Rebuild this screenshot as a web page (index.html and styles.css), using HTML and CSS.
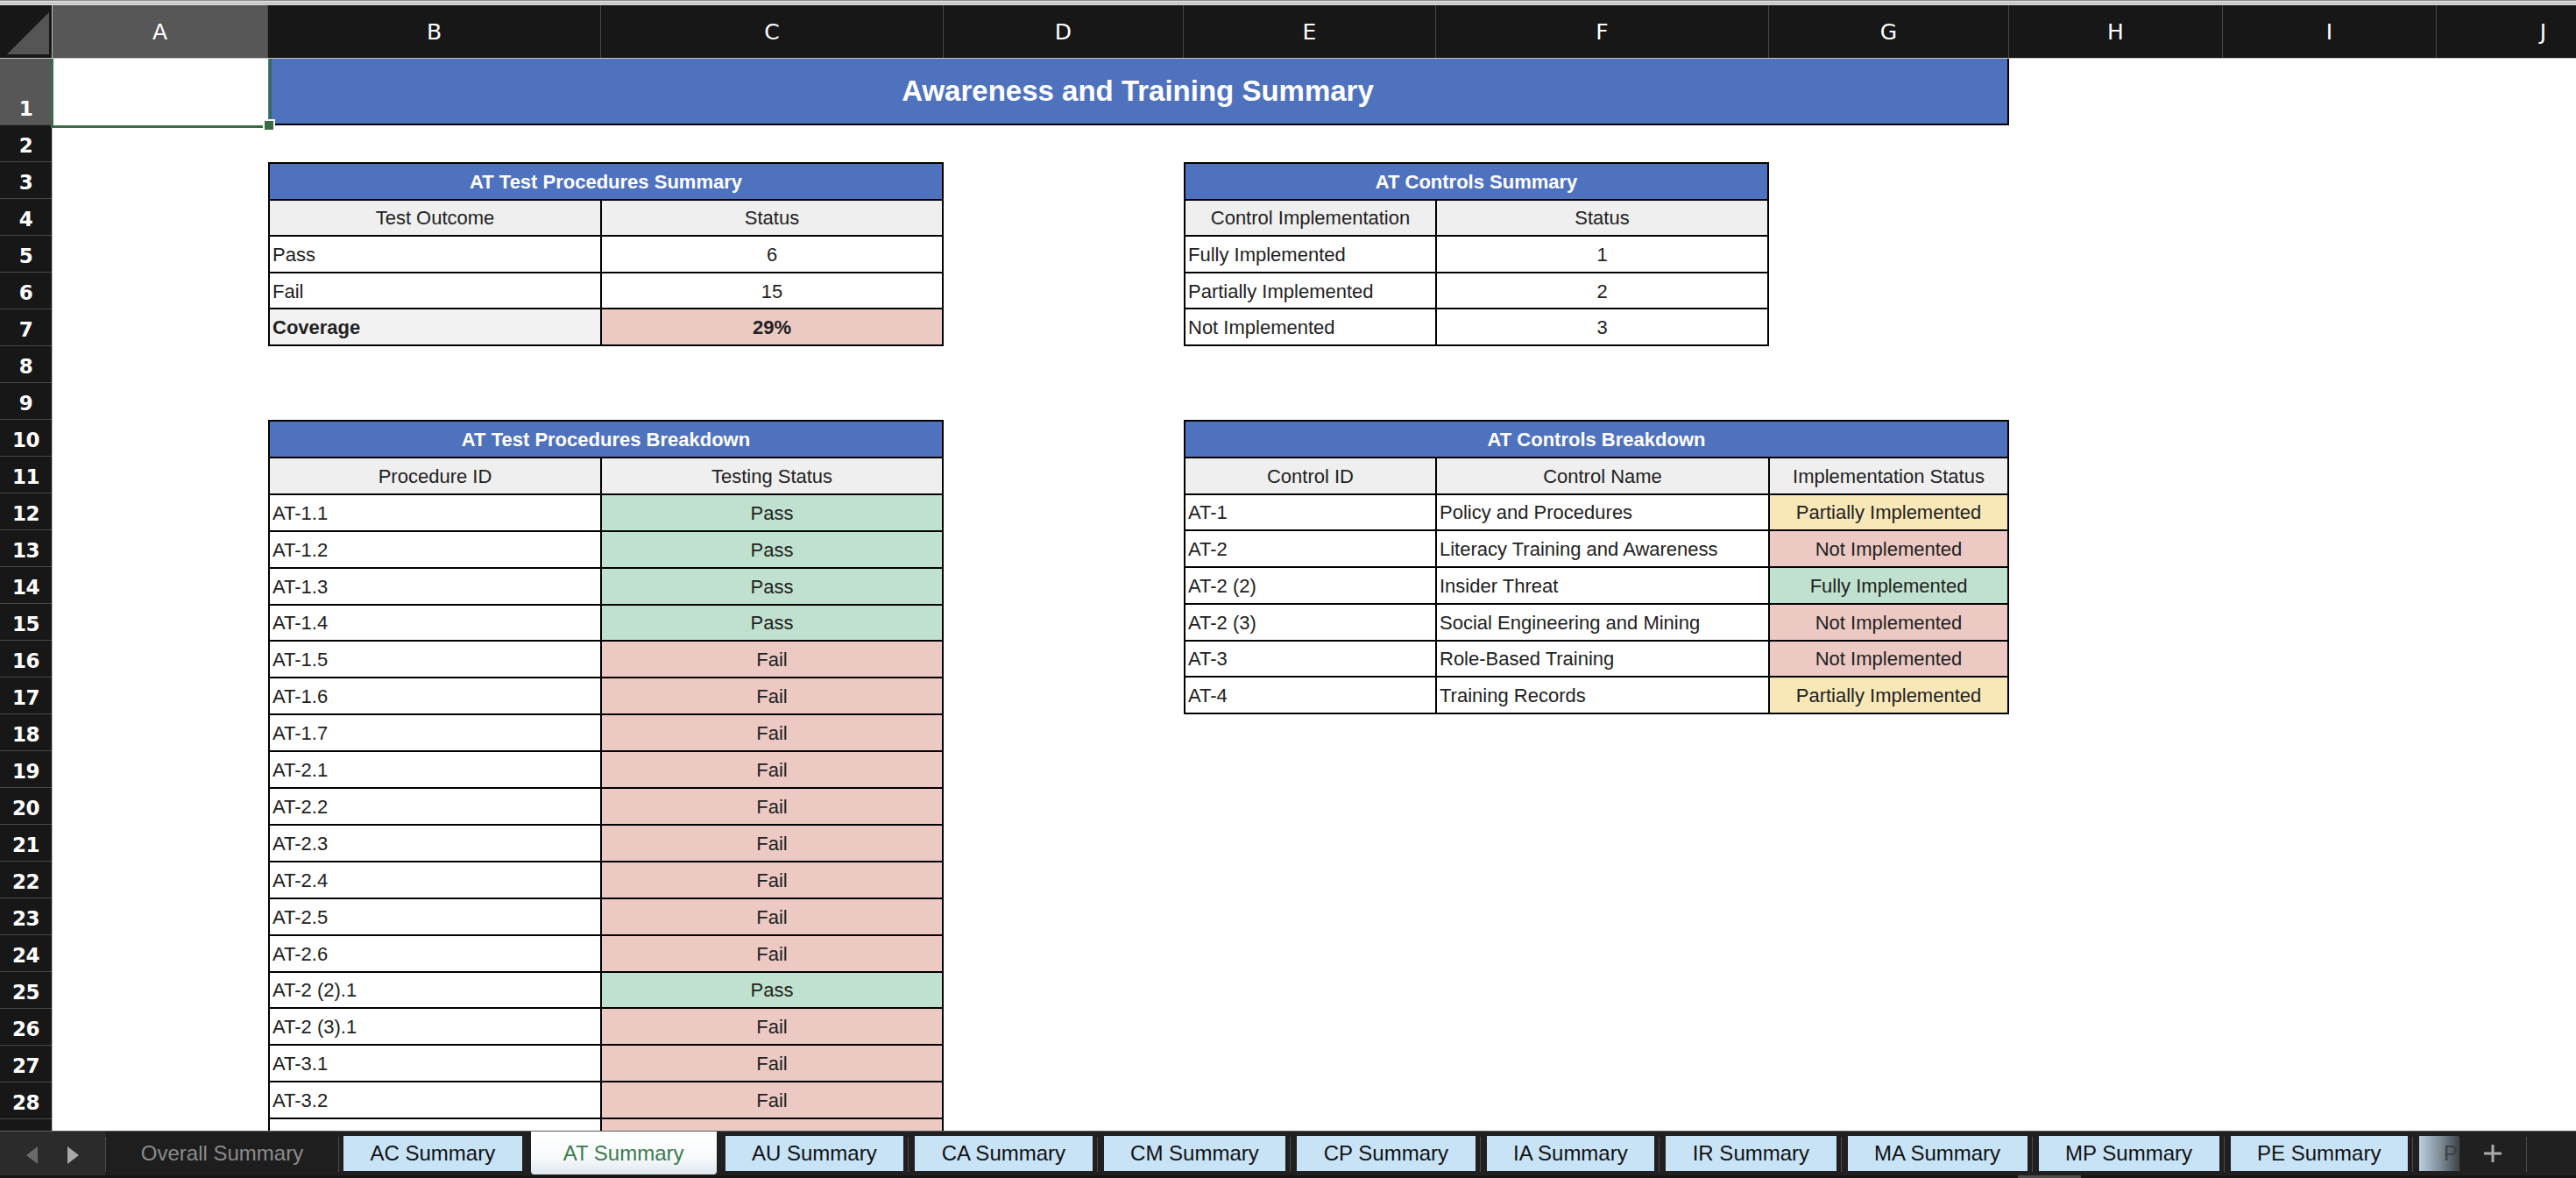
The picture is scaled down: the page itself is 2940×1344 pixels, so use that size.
FILE: index.html
```html
<!DOCTYPE html>
<html>
<head>
<meta charset="utf-8">
<title>Awareness and Training Summary</title>
<link rel="stylesheet" href="styles.css">
</head>
<body>
<div class="app">
  <div class="topstrip"></div>
  <div class="colhead">
    <div class="corner"><svg width="59" height="60" viewBox="0 0 59 60"><polygon points="8,56 56,8 56,56" fill="#555555"/></svg></div>
    <div class="ch sel">A</div>
    <div class="ch">B</div>
    <div class="ch">C</div>
    <div class="ch">D</div>
    <div class="ch">E</div>
    <div class="ch">F</div>
    <div class="ch">G</div>
    <div class="ch">H</div>
    <div class="ch">I</div>
    <div class="ch">J</div>
  </div>
  <div class="body">
    <div class="rowhead">
      <div class="rh r1 sel">1</div>
      <div class="rh">2</div>
      <div class="rh">3</div>
      <div class="rh">4</div>
      <div class="rh">5</div>
      <div class="rh">6</div>
      <div class="rh">7</div>
      <div class="rh">8</div>
      <div class="rh">9</div>
      <div class="rh">10</div>
      <div class="rh">11</div>
      <div class="rh">12</div>
      <div class="rh">13</div>
      <div class="rh">14</div>
      <div class="rh">15</div>
      <div class="rh">16</div>
      <div class="rh">17</div>
      <div class="rh">18</div>
      <div class="rh">19</div>
      <div class="rh">20</div>
      <div class="rh">21</div>
      <div class="rh">22</div>
      <div class="rh">23</div>
      <div class="rh">24</div>
      <div class="rh">25</div>
      <div class="rh">26</div>
      <div class="rh">27</div>
      <div class="rh">28</div>
      <div class="rh"></div>
    </div>
    <div class="cells">
      <div class="selbox"><span class="handle"></span></div>
      <div class="title">Awareness and Training Summary</div>

      <div class="tbl t1">
        <div class="cap">AT Test Procedures Summary</div>
        <div class="th">Test Outcome</div><div class="th">Status</div>
        <div>Pass</div><div class="ctr">6</div>
        <div>Fail</div><div class="ctr">15</div>
        <div class="b lab">Coverage</div><div class="ctr b fail">29%</div>
      </div>

      <div class="tbl t2">
        <div class="cap">AT Controls Summary</div>
        <div class="th">Control Implementation</div><div class="th">Status</div>
        <div>Fully Implemented</div><div class="ctr">1</div>
        <div>Partially Implemented</div><div class="ctr">2</div>
        <div>Not Implemented</div><div class="ctr">3</div>
      </div>

      <div class="tbl t3">
        <div class="cap">AT Test Procedures Breakdown</div>
        <div class="th">Procedure ID</div><div class="th">Testing Status</div>
        <div>AT-1.1</div><div class="ctr pass">Pass</div>
        <div>AT-1.2</div><div class="ctr pass">Pass</div>
        <div>AT-1.3</div><div class="ctr pass">Pass</div>
        <div>AT-1.4</div><div class="ctr pass">Pass</div>
        <div>AT-1.5</div><div class="ctr fail">Fail</div>
        <div>AT-1.6</div><div class="ctr fail">Fail</div>
        <div>AT-1.7</div><div class="ctr fail">Fail</div>
        <div>AT-2.1</div><div class="ctr fail">Fail</div>
        <div>AT-2.2</div><div class="ctr fail">Fail</div>
        <div>AT-2.3</div><div class="ctr fail">Fail</div>
        <div>AT-2.4</div><div class="ctr fail">Fail</div>
        <div>AT-2.5</div><div class="ctr fail">Fail</div>
        <div>AT-2.6</div><div class="ctr fail">Fail</div>
        <div>AT-2 (2).1</div><div class="ctr pass">Pass</div>
        <div>AT-2 (3).1</div><div class="ctr fail">Fail</div>
        <div>AT-3.1</div><div class="ctr fail">Fail</div>
        <div>AT-3.2</div><div class="ctr fail">Fail</div>
        <div></div><div class="ctr fail"></div>
      </div>

      <div class="tbl t4">
        <div class="cap">AT Controls Breakdown</div>
        <div class="th">Control ID</div><div class="th">Control Name</div><div class="th">Implementation Status</div>
        <div>AT-1</div><div>Policy and Procedures</div><div class="ctr part">Partially Implemented</div>
        <div>AT-2</div><div>Literacy Training and Awareness</div><div class="ctr fail">Not Implemented</div>
        <div>AT-2 (2)</div><div>Insider Threat</div><div class="ctr pass">Fully Implemented</div>
        <div>AT-2 (3)</div><div>Social Engineering and Mining</div><div class="ctr fail">Not Implemented</div>
        <div>AT-3</div><div>Role-Based Training</div><div class="ctr fail">Not Implemented</div>
        <div>AT-4</div><div>Training Records</div><div class="ctr part">Partially Implemented</div>
      </div>
    </div>
  </div>
  <div class="tabbar">
    <div class="nav"><svg width="120" height="53" viewBox="0 0 120 53"><polygon points="43,17 30,27 43,37" fill="#6a6a6a"/><polygon points="77,17 90,27 77,37" fill="#a9a9a9"/></svg></div>
    <span class="sep s-flush"></span>
    <div class="overall">Overall Summary</div>
    <span class="sep s-first"></span>
    <div class="tab">AC Summary</div>
    <div class="tab active">AT Summary</div>
    <div class="tab gap10">AU Summary</div>
    <span class="sep"></span>
    <div class="tab">CA Summary</div>
    <span class="sep"></span>
    <div class="tab">CM Summary</div>
    <span class="sep"></span>
    <div class="tab">CP Summary</div>
    <span class="sep"></span>
    <div class="tab">IA Summary</div>
    <span class="sep"></span>
    <div class="tab">IR Summary</div>
    <span class="sep"></span>
    <div class="tab">MA Summary</div>
    <span class="sep"></span>
    <div class="tab">MP Summary</div>
    <span class="sep"></span>
    <div class="tab">PE Summary</div>
    <span class="sep"></span>
    <div class="fade"><span class="fade-txt">P</span></div>
    <span class="sep s-flush"></span>
    <div class="plus"><svg width="20" height="20" viewBox="0 0 20 20"><path d="M10 0V20M0 10H20" stroke="#ababab" stroke-width="3"/></svg></div>
    <span class="sep s-flush"></span>
    <span class="thumb"></span>
  </div>
</div>
</body>
</html>
```

FILE: styles.css
```css
html, body {
  margin: 0;
  padding: 0;
  background: #ffffff;
}

.app {
  width: 2940px;
  height: 1344px;
  overflow: hidden;
  display: flex;
  flex-direction: column;
}

.topstrip {
  height: 6px;
  flex: none;
  background: linear-gradient(#8e8e8e 0 1px, #dadada 1px 3px, #b9b9b9 3px 4px, #d4d4d4 4px 6px);
}

.colhead {
  flex: none;
  height: 61px;
  box-sizing: border-box;
  border-bottom: 1px solid #c3c3c3;
  display: grid;
  grid-template-columns: 60px 246px 380px 391px 274px 288px 380px 274px 244px 244px 244px;
  background: #171717;
  overflow: hidden;
}

.corner {
  background: #171717;
  border-right: 1px solid #bdbdbd;
  display: flex;
}

.ch {
  background: #171717;
  border-right: 1px solid #474747;
  color: #ffffff;
  font: 25px/1 "DejaVu Sans", sans-serif;
  display: flex;
  align-items: center;
  justify-content: center;
}

.ch.sel {
  background: #575757;
}

.body {
  flex: none;
  height: 1223px;
  display: flex;
  overflow: hidden;
}

.rowhead {
  flex: none;
  width: 60px;
  box-sizing: border-box;
  background: #171717;
  border-right: 1px solid #bdbdbd;
}

.rh {
  height: 42px;
  box-sizing: border-box;
  border-bottom: 1px solid #474747;
  display: flex;
  align-items: flex-end;
  justify-content: center;
  padding-bottom: 6px;
  color: #ffffff;
  font: bold 23px/1 "DejaVu Sans", sans-serif;
  letter-spacing: -0.5px;
}

.rh.r1 {
  height: 76px;
}

.rh.sel {
  background: #575757;
}

.cells {
  flex: none;
  display: grid;
  grid-template-columns: 246px 380px 391px 274px 288px 380px 274px 244px 244px 244px;
  grid-template-rows: 76px repeat(28, 42px);
  background: #ffffff;
}

.selbox {
  grid-area: 1 / 1 / 2 / 2;
  margin: -3px -4px -3px -2px;
  border: 3px solid #3b6c48;
  position: relative;
  z-index: 2;
}

.handle {
  position: absolute;
  right: -5px;
  bottom: -5px;
  width: 10px;
  height: 10px;
  background: #3b6c48;
  box-shadow: 0 0 0 2px #ffffff;
}

.title {
  grid-area: 1 / 2 / 2 / 8;
  background: #4f72bf;
  border-bottom: 2px solid #000000;
  border-right: 2px solid #000000;
  color: #ffffff;
  font: bold 33px "Liberation Sans", Arial, sans-serif;
  display: flex;
  align-items: center;
  justify-content: center;
}

.tbl {
  display: grid;
  gap: 2px;
  background: #000000;
  border: 2px solid #000000;
  font: 22px "Liberation Sans", Arial, sans-serif;
  color: #222222;
}

.tbl > div {
  background: #ffffff;
  display: flex;
  align-items: center;
  padding: 2px 3px 0;
  white-space: nowrap;
  overflow: hidden;
}

.t1 {
  grid-area: 3 / 2 / 8 / 4;
  grid-template-columns: 377px 1fr;
  grid-template-rows: repeat(5, 1fr);
}

.t2 {
  grid-area: 3 / 5 / 8 / 7;
  grid-template-columns: 285px 1fr;
  grid-template-rows: repeat(5, 1fr);
}

.t3 {
  grid-area: 10 / 2 / 30 / 4;
  grid-template-columns: 377px 1fr;
  grid-template-rows: repeat(20, 1fr);
}

.t4 {
  grid-area: 10 / 5 / 18 / 8;
  grid-template-columns: 285px 378px 1fr;
  grid-template-rows: repeat(8, 1fr);
}

.tbl > .cap {
  grid-column: 1 / -1;
  background: #4f72bf;
  color: #ffffff;
  font-weight: bold;
  justify-content: center;
}

.tbl > .th {
  background: #efefef;
  justify-content: center;
}

.tbl > .ctr {
  justify-content: center;
}

.tbl > .b {
  font-weight: bold;
}

.tbl > .lab {
  background: #f2f2f2;
}

.tbl > .pass {
  background: #c0e1cf;
}

.tbl > .fail {
  background: #ecc9c3;
}

.tbl > .part {
  background: #f9e8b7;
}

.tabbar {
  flex: none;
  height: 54px;
  box-sizing: border-box;
  border-top: 1px solid #5c5c5c;
  background: #202020;
  display: flex;
  position: relative;
  font: 24px "Liberation Sans", Arial, sans-serif;
  border-bottom: 3px solid #161616;
}

.nav {
  flex: none;
  width: 120px;
  background: #2b2b2b;
  display: flex;
}

.sep {
  flex: none;
  width: 1px;
  height: 40px;
  margin: 1px 7px 0 5px;
  align-self: center;
  background: #4b4b4b;
}

.sep.s-flush {
  margin: 1px 0 0 0;
}

.sep.s-first {
  margin: 1px 5px 0 0;
}

.overall {
  flex: none;
  width: 265px;
  color: #8b8b8b;
  display: flex;
  align-items: center;
  justify-content: center;
  background: #1e1e1e;
}

.tab {
  flex: none;
  margin-top: 5px;
  height: 40px;
  box-sizing: border-box;
  padding: 0 30.5px;
  background: #c8e3f6;
  color: #111111;
  display: flex;
  align-items: center;
  white-space: nowrap;
}

.tab.active {
  margin: 0 0 0 10px;
  height: 49px;
  padding: 0 37px;
  color: #3b7b4d;
  background: linear-gradient(#ffffff 0%, #f7fafc 60%, #dfe7ed 100%);
  border-radius: 0 0 4px 4px;
}

.tab.gap10 {
  margin-left: 10px;
}

.fade {
  flex: none;
  width: 45px;
  margin-top: 5px;
  height: 40px;
  box-sizing: border-box;
  padding-left: 28px;
  overflow: hidden;
  white-space: nowrap;
  display: flex;
  align-items: center;
  color: #3a3a3a;
  background: linear-gradient(90deg, #b9cfde 0%, #7d8b96 55%, #3f454b 100%);
}

.fade-txt {
  color: #3a3f44;
}

.plus {
  flex: none;
  width: 76px;
  display: flex;
  align-items: center;
  justify-content: center;
}

.thumb {
  position: absolute;
  left: 2303px;
  bottom: -3px;
  width: 72px;
  height: 3px;
  background: #4e4e4e;
}
```
